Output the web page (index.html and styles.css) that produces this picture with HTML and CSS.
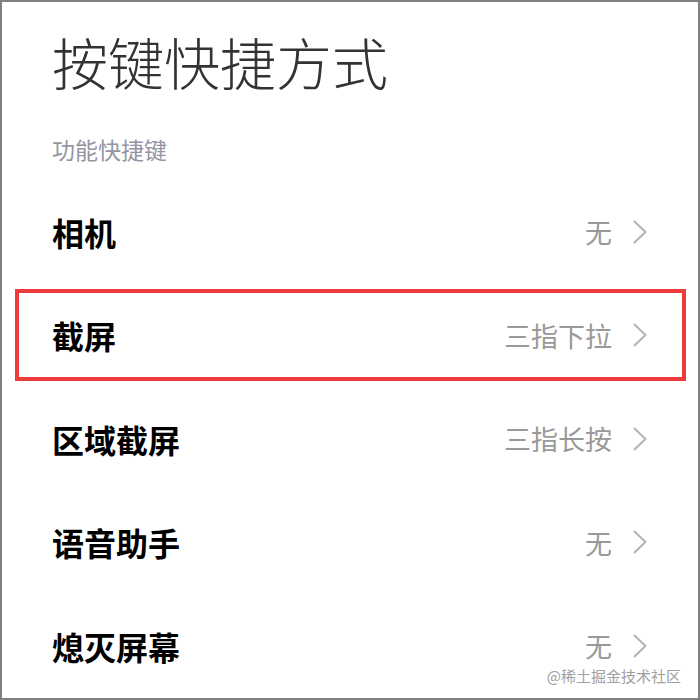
FILE: index.html
```html
<!DOCTYPE html>
<html lang="zh-CN">
<head>
  <meta charset="UTF-8" />
  <meta name="viewport" content="width=device-width, initial-scale=1.0"/>
  <title>按键快捷方式</title>
  <link rel="stylesheet" href="styles.css">
</head>
<body>
  <div class="screen">
    <h1 class="page-title">按键快捷方式</h1>
    <div class="section-label">功能快捷键</div>

    <div class="list">
      <div class="row">
        <span class="row-name">相机</span>
        <span class="row-value">无</span>
        <svg class="chevron" viewBox="0 0 14 24"><path d="M1.5 1.5 L12.5 12 L1.5 22.5" /></svg>
      </div>
      <div class="row highlight">
        <span class="row-name">截屏</span>
        <span class="row-value">三指下拉</span>
        <svg class="chevron" viewBox="0 0 14 24"><path d="M1.5 1.5 L12.5 12 L1.5 22.5" /></svg>
      </div>
      <div class="row">
        <span class="row-name">区域截屏</span>
        <span class="row-value">三指长按</span>
        <svg class="chevron" viewBox="0 0 14 24"><path d="M1.5 1.5 L12.5 12 L1.5 22.5" /></svg>
      </div>
      <div class="row">
        <span class="row-name">语音助手</span>
        <span class="row-value">无</span>
        <svg class="chevron" viewBox="0 0 14 24"><path d="M1.5 1.5 L12.5 12 L1.5 22.5" /></svg>
      </div>
      <div class="row">
        <span class="row-name">熄灭屏幕</span>
        <span class="row-value">无</span>
        <svg class="chevron" viewBox="0 0 14 24"><path d="M1.5 1.5 L12.5 12 L1.5 22.5" /></svg>
      </div>
    </div>

    <div class="watermark">@稀土掘金技术社区</div>
  </div>
</body>
</html>
```

FILE: styles.css
```css
:root {
  --title: #333333;
  --label: #9494a3;
  --text: #000000;
  --value: #999999;
  --chevron: #b3b3b3;
  --mark: #ee3b3b;
}

* {
  box-sizing: border-box;
}

html, body {
  margin: 0;
  padding: 0;
  background: #ffffff;
}

body {
  font-family: "Noto Sans CJK SC", "Noto Sans", sans-serif;
}

.screen {
  position: relative;
  width: 700px;
  height: 700px;
  border: 2px solid #7f7f7f;
  padding: 0 50px;
  overflow: hidden;
}

.page-title {
  margin: 29px 0 0;
  font-size: 56px;
  line-height: 60px;
  font-weight: 300;
  color: var(--title);
}

.section-label {
  margin-top: 44px;
  font-size: 23px;
  line-height: 28px;
  color: var(--label);
}

.list {
  margin-top: 17px;
}

.row {
  position: relative;
  display: flex;
  align-items: center;
  height: 103.5px;
}

.row-name {
  flex: 1;
  font-size: 32px;
  line-height: 40px;
  font-weight: 700;
  color: var(--text);
}

.row-value {
  font-size: 27px;
  line-height: 27px;
  color: var(--value);
  margin-right: 21px;
}

.chevron {
  width: 14px;
  height: 24px;
  margin-right: 1px;
}

.chevron path {
  fill: none;
  stroke: var(--chevron);
  stroke-width: 2;
  stroke-linecap: round;
  stroke-linejoin: round;
}

/* annotation frame around the screenshot row */
.highlight::after {
  content: "";
  position: absolute;
  left: -37px;
  right: -38px;
  top: 5px;
  bottom: 6px;
  border: 4px solid var(--mark);
}

.watermark {
  position: absolute;
  right: 17px;
  bottom: 13px;
  font-size: 15px;
  line-height: 18px;
  color: #a0a0a0;
  text-shadow: 0 0 2px #ffffff;
}
```
